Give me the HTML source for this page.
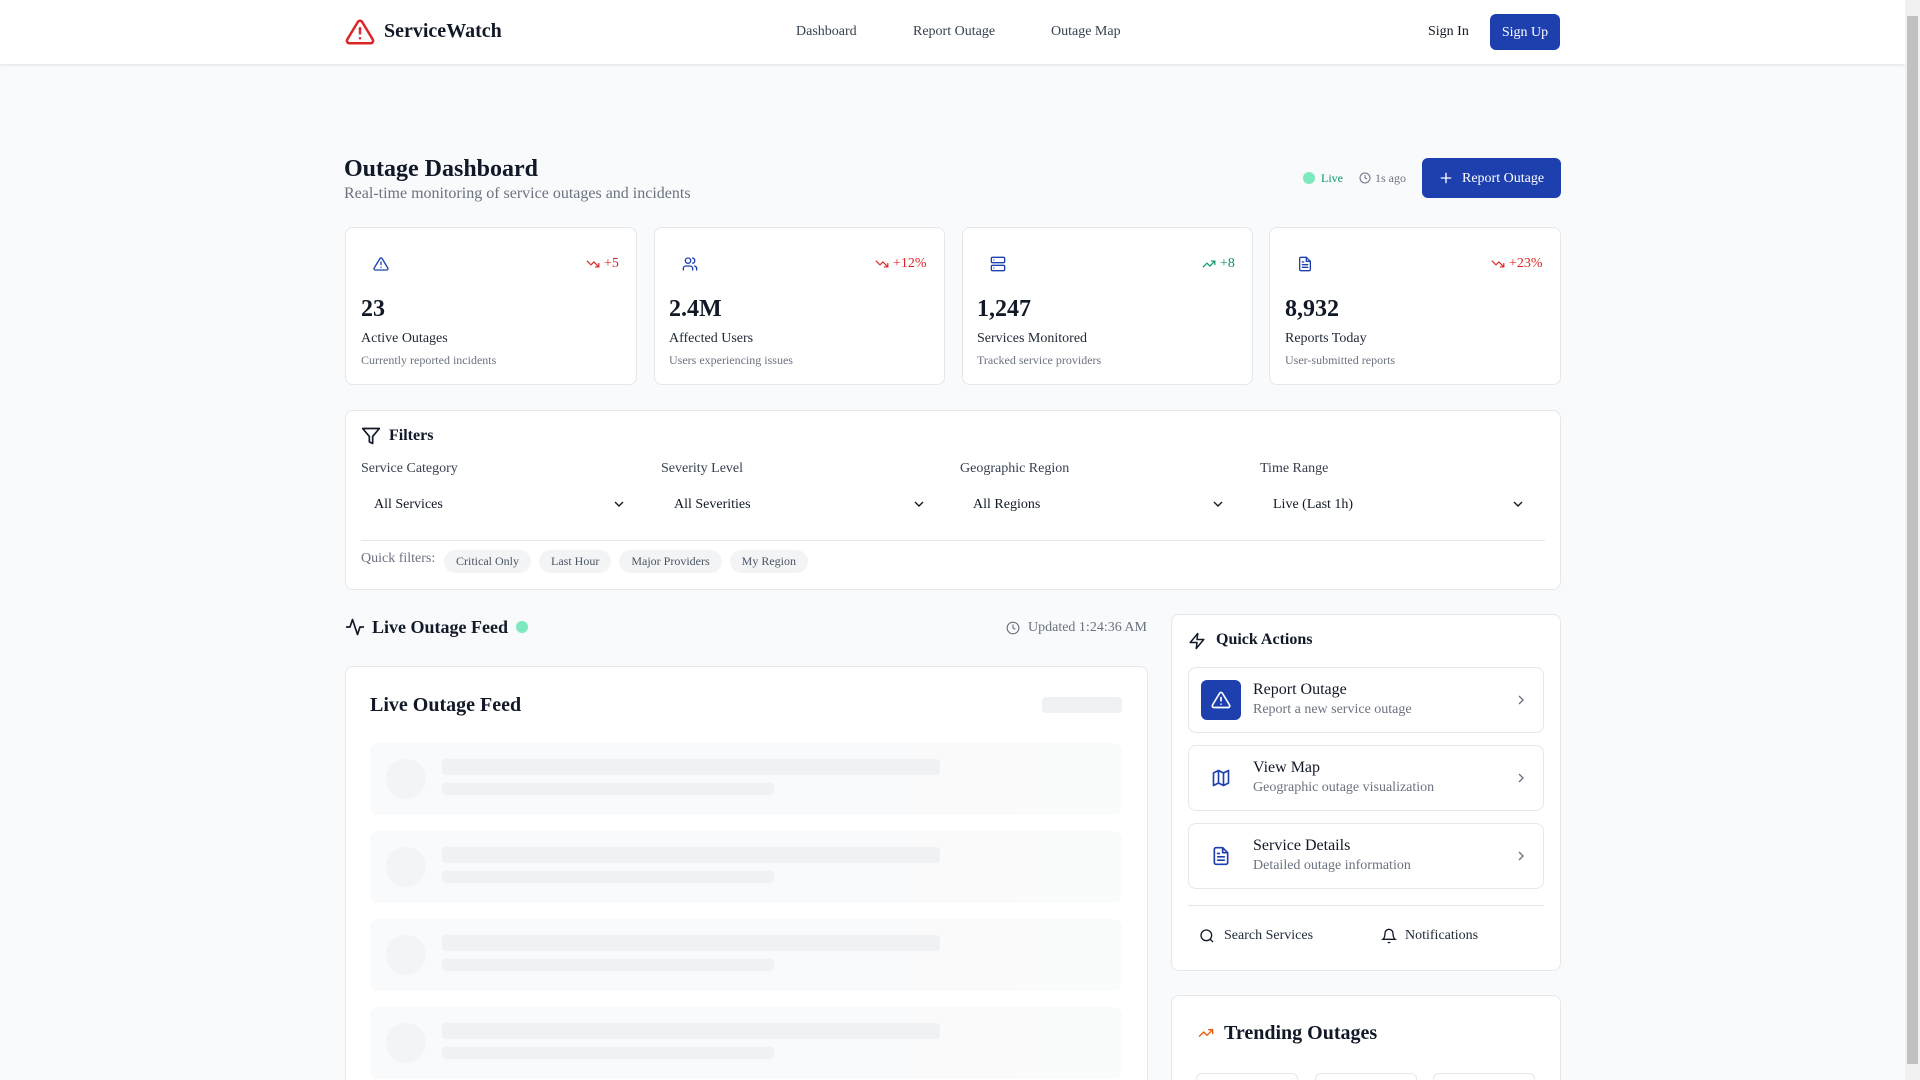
<!DOCTYPE html>
<html><head><meta charset="utf-8"><style>
*{box-sizing:border-box;margin:0;padding:0}
html,body{width:1920px;height:1080px;overflow:hidden}
body{background:#f9fafb;font-family:"Liberation Serif",serif;color:#111827;position:relative}
.abs{position:absolute}
nav{position:absolute;left:0;top:0;width:1905px;height:64px;background:#fff;box-shadow:0 1px 3px rgba(0,0,0,.1)}
.card{position:absolute;background:#fff;border:1px solid #e5e7eb;border-radius:8px}
.sb{position:absolute;left:1905px;top:0;width:15px;height:1080px;background:#f1f1f1}
.sb i{position:absolute;left:2px;top:16px;width:11px;height:1048px;background:#c1c1c1}
svg{display:block}
.muted{color:#6b7280}
.sel{position:absolute;top:484px;height:40px;width:276px;font-size:14px;color:#111827;padding:13px 13px 0}
.sel svg{position:absolute;right:10px;top:12px}
.chip{display:inline-block;background:#f3f4f6;border-radius:12px;font-size:12px;color:#4b5563;padding:4px 12px;margin-right:8px}
.row{position:absolute;left:370px;width:752px;height:72px;border-radius:8px;background:linear-gradient(90deg,#f9fafb,#f9fafb 60%,#fafbfb)}
.row .c{position:absolute;left:16px;top:16px;width:40px;height:40px;border-radius:50%;background:#f3f4f6}
.row .l1{position:absolute;left:72px;top:16px;width:498px;height:16px;border-radius:4px;background:#f0f1f3}
.row .l2{position:absolute;left:72px;top:40px;width:332px;height:12px;border-radius:4px;background:#f0f1f3}
.qa{position:absolute;left:1188px;width:356px;height:66px;border:1px solid #e5e7eb;border-radius:8px;background:#fff}
.qa .ic{position:absolute;left:12px;top:12px;width:40px;height:40px;border-radius:6px;display:flex;align-items:center;justify-content:center}
.qa .t{position:absolute;left:64px;top:13px;font-size:16px;color:#111827}
.qa .s{position:absolute;left:64px;top:34px;font-size:14px;color:#6b7280}
.qa .ch{position:absolute;right:14px;top:24px}
.tr{position:absolute;top:256px;font-size:14px;display:flex;align-items:center;gap:4px}
</style></head><body>
<nav>
 <svg class="abs" style="left:345px;top:17px" width="30" height="30" viewBox="0 0 24 24" fill="none" stroke="#dc2626" stroke-width="2" stroke-linecap="round" stroke-linejoin="round"><path d="M10.3 3.9 1.8 18a2 2 0 0 0 1.7 3h17a2 2 0 0 0 1.7-3L13.7 3.9a2 2 0 0 0-3.4 0z"/><path d="M12 9v4M12 17h.01"/></svg>
 <div class="abs" style="left:384px;top:20px;font-size:20px;font-weight:bold">ServiceWatch</div>
 <div class="abs" style="left:796px;top:24px;font-size:14px;color:#374151">Dashboard</div>
 <div class="abs" style="left:913px;top:24px;font-size:14px;color:#374151">Report Outage</div>
 <div class="abs" style="left:1051px;top:24px;font-size:14px;color:#374151">Outage Map</div>
 <div class="abs" style="left:1428px;top:24px;font-size:14px;color:#111827">Sign In</div>
 <div class="abs" style="left:1490px;top:14px;width:70px;height:36px;background:#1e40af;border-radius:6px;color:#fff;font-size:14px;text-align:center;line-height:37px">Sign Up</div>
</nav>

<div class="abs" style="left:344px;top:156px;font-size:24px;font-weight:bold">Outage Dashboard</div>
<div class="abs muted" style="left:344px;top:185px;font-size:16px">Real-time monitoring of service outages and incidents</div>
<div class="abs" style="left:1303px;top:172px;width:12px;height:12px;border-radius:50%;background:#6ee7b7;opacity:.9"></div>
<div class="abs" style="left:1321px;top:171px;font-size:12px;color:#059669">Live</div>
<svg class="abs" style="left:1359px;top:172px" width="12" height="12" viewBox="0 0 24 24" fill="none" stroke="#6b7280" stroke-width="2"><circle cx="12" cy="12" r="10"/><path d="M12 6v6l4 2"/></svg>
<div class="abs muted" style="left:1375px;top:171px;font-size:12px">1s ago</div>
<div class="abs" style="left:1422px;top:158px;width:139px;height:40px;background:#1e40af;border-radius:6px;color:#fff;font-size:14px;line-height:41px;padding-left:40px">Report Outage</div>
<svg class="abs" style="left:1438px;top:170px" width="16" height="16" viewBox="0 0 24 24" fill="none" stroke="#fff" stroke-width="2" stroke-linecap="round"><path d="M12 5v14M5 12h14"/></svg>

<div class="card" style="left:345px;top:227px;width:292px;height:158px"></div>
<div class="card" style="left:654px;top:227px;width:291px;height:158px"></div>
<div class="card" style="left:962px;top:227px;width:291px;height:158px"></div>
<div class="card" style="left:1269px;top:227px;width:292px;height:158px"></div>

<svg class="abs" style="left:373px;top:256px" width="16" height="16" viewBox="0 0 24 24" fill="none" stroke="#1e40af" stroke-width="2" stroke-linecap="round" stroke-linejoin="round"><path d="M10.3 3.9 1.8 18a2 2 0 0 0 1.7 3h17a2 2 0 0 0 1.7-3L13.7 3.9a2 2 0 0 0-3.4 0z"/><path d="M12 9v4M12 17h.01"/></svg>
<svg class="abs" style="left:682px;top:256px" width="16" height="16" viewBox="0 0 24 24" fill="none" stroke="#1e40af" stroke-width="2" stroke-linecap="round"><circle cx="9" cy="7" r="4"/><path d="M16 21v-2a4 4 0 0 0-4-4H6a4 4 0 0 0-4 4v2M16 3.1a4 4 0 0 1 0 7.8M22 21v-2a4 4 0 0 0-3-3.9"/></svg>
<svg class="abs" style="left:990px;top:256px" width="16" height="16" viewBox="0 0 24 24" fill="none" stroke="#1e40af" stroke-width="2" stroke-linecap="round"><rect x="2" y="2" width="20" height="8" rx="2"/><rect x="2" y="14" width="20" height="8" rx="2"/><path d="M6 6h.01M6 18h.01"/></svg>
<svg class="abs" style="left:1297px;top:256px" width="16" height="16" viewBox="0 0 24 24" fill="none" stroke="#1e40af" stroke-width="2" stroke-linecap="round" stroke-linejoin="round"><path d="M14 2H6a2 2 0 0 0-2 2v16a2 2 0 0 0 2 2h12a2 2 0 0 0 2-2V8z"/><path d="M14 2v6h6M16 13H8M16 17H8M10 9H8"/></svg>

<div class="tr" style="left:586px;color:#dc2626"><svg width="14" height="14" viewBox="0 0 24 24" fill="none" stroke="#dc2626" stroke-width="2" stroke-linecap="round" stroke-linejoin="round"><path d="m22 17-8.5-8.5-5 5L2 7M16 17h6v-6"/></svg>+5</div>
<div class="tr" style="left:875px;color:#dc2626"><svg width="14" height="14" viewBox="0 0 24 24" fill="none" stroke="#dc2626" stroke-width="2" stroke-linecap="round" stroke-linejoin="round"><path d="m22 17-8.5-8.5-5 5L2 7M16 17h6v-6"/></svg>+12%</div>
<div class="tr" style="left:1202px;color:#059669"><svg width="14" height="14" viewBox="0 0 24 24" fill="none" stroke="#059669" stroke-width="2" stroke-linecap="round" stroke-linejoin="round"><path d="m22 7-8.5 8.5-5-5L2 17M16 7h6v6"/></svg>+8</div>
<div class="tr" style="left:1491px;color:#dc2626"><svg width="14" height="14" viewBox="0 0 24 24" fill="none" stroke="#dc2626" stroke-width="2" stroke-linecap="round" stroke-linejoin="round"><path d="m22 17-8.5-8.5-5 5L2 7M16 17h6v-6"/></svg>+23%</div>

<div class="abs" style="left:361px;top:296px;font-size:24px;font-weight:bold">23</div>
<div class="abs" style="left:669px;top:296px;font-size:24px;font-weight:bold">2.4M</div>
<div class="abs" style="left:977px;top:296px;font-size:24px;font-weight:bold">1,247</div>
<div class="abs" style="left:1285px;top:296px;font-size:24px;font-weight:bold">8,932</div>
<div class="abs" style="left:361px;top:331px;font-size:14px;color:#1f2937">Active Outages</div>
<div class="abs" style="left:669px;top:331px;font-size:14px;color:#1f2937">Affected Users</div>
<div class="abs" style="left:977px;top:331px;font-size:14px;color:#1f2937">Services Monitored</div>
<div class="abs" style="left:1285px;top:331px;font-size:14px;color:#1f2937">Reports Today</div>
<div class="abs muted" style="left:361px;top:353px;font-size:12px">Currently reported incidents</div>
<div class="abs muted" style="left:669px;top:353px;font-size:12px">Users experiencing issues</div>
<div class="abs muted" style="left:977px;top:353px;font-size:12px">Tracked service providers</div>
<div class="abs muted" style="left:1285px;top:353px;font-size:12px">User-submitted reports</div>

<div class="card" style="left:345px;top:410px;width:1216px;height:180px"></div>
<svg class="abs" style="left:361px;top:426px" width="20" height="20" viewBox="0 0 24 24" fill="none" stroke="#111827" stroke-width="2" stroke-linejoin="round"><path d="M22 3H2l8 9.5V19l4 2v-8.5z"/></svg>
<div class="abs" style="left:389px;top:427px;font-size:16px;font-weight:bold">Filters</div>
<div class="abs" style="left:361px;top:461px;font-size:14px;color:#374151">Service Category</div>
<div class="abs" style="left:661px;top:461px;font-size:14px;color:#374151">Severity Level</div>
<div class="abs" style="left:960px;top:461px;font-size:14px;color:#374151">Geographic Region</div>
<div class="abs" style="left:1260px;top:461px;font-size:14px;color:#374151">Time Range</div>
<div class="sel" style="left:361px">All Services<svg width="16" height="16" viewBox="0 0 24 24" fill="none" stroke="#111827" stroke-width="2"><path d="m6 9 6 6 6-6"/></svg></div>
<div class="sel" style="left:661px">All Severities<svg width="16" height="16" viewBox="0 0 24 24" fill="none" stroke="#111827" stroke-width="2"><path d="m6 9 6 6 6-6"/></svg></div>
<div class="sel" style="left:960px">All Regions<svg width="16" height="16" viewBox="0 0 24 24" fill="none" stroke="#111827" stroke-width="2"><path d="m6 9 6 6 6-6"/></svg></div>
<div class="sel" style="left:1260px">Live (Last 1h)<svg width="16" height="16" viewBox="0 0 24 24" fill="none" stroke="#111827" stroke-width="2"><path d="m6 9 6 6 6-6"/></svg></div>
<div class="abs" style="left:361px;top:540px;width:1184px;height:1px;background:#e5e7eb"></div>
<div class="abs muted" style="left:361px;top:551px;font-size:14px">Quick filters:</div>
<div class="abs" style="left:444px;top:550px"><span class="chip">Critical Only</span><span class="chip">Last Hour</span><span class="chip">Major Providers</span><span class="chip">My Region</span></div>

<svg class="abs" style="left:345px;top:617px" width="20" height="20" viewBox="0 0 24 24" fill="none" stroke="#111827" stroke-width="2" stroke-linecap="round" stroke-linejoin="round"><path d="M22 12h-4l-3 9L9 3l-3 9H2"/></svg>
<div class="abs" style="left:372px;top:617px;font-size:18px;font-weight:bold">Live Outage Feed</div>
<div class="abs" style="left:516px;top:621px;width:12px;height:12px;border-radius:50%;background:#6ee7b7;opacity:.9"></div>
<svg class="abs" style="left:1006px;top:621px" width="14" height="14" viewBox="0 0 24 24" fill="none" stroke="#6b7280" stroke-width="2"><circle cx="12" cy="12" r="10"/><path d="M12 6v6l4 2"/></svg>
<div class="abs muted" style="left:1028px;top:620px;font-size:14px">Updated 1:24:36 AM</div>

<div class="card" style="left:345px;top:666px;width:803px;height:450px"></div>
<div class="abs" style="left:370px;top:694px;font-size:20px;font-weight:bold">Live Outage Feed</div>
<div class="abs" style="left:1042px;top:697px;width:80px;height:16px;border-radius:4px;background:#f0f1f3"></div>
<div class="row" style="top:743px"><div class="c"></div><div class="l1"></div><div class="l2"></div></div>
<div class="row" style="top:831px"><div class="c"></div><div class="l1"></div><div class="l2"></div></div>
<div class="row" style="top:919px"><div class="c"></div><div class="l1"></div><div class="l2"></div></div>
<div class="row" style="top:1007px"><div class="c"></div><div class="l1"></div><div class="l2"></div></div>

<div class="card" style="left:1171px;top:614px;width:390px;height:357px"></div>
<svg class="abs" style="left:1188px;top:631px" width="18" height="20" viewBox="0 0 24 24" fill="none" stroke="#111827" stroke-width="2" stroke-linejoin="round"><path d="M13 2 3 14h9l-1 8 10-12h-9z"/></svg>
<div class="abs" style="left:1216px;top:631px;font-size:16px;font-weight:bold">Quick Actions</div>
<div class="qa" style="top:667px"><div class="ic" style="background:#1e40af"><svg width="20" height="20" viewBox="0 0 24 24" fill="none" stroke="#fff" stroke-width="2" stroke-linecap="round" stroke-linejoin="round"><path d="M10.3 3.9 1.8 18a2 2 0 0 0 1.7 3h17a2 2 0 0 0 1.7-3L13.7 3.9a2 2 0 0 0-3.4 0z"/><path d="M12 9v4M12 17h.01"/></svg></div><div class="t">Report Outage</div><div class="s">Report a new service outage</div><svg class="ch" width="16" height="16" viewBox="0 0 24 24" fill="none" stroke="#6b7280" stroke-width="2"><path d="m9 18 6-6-6-6"/></svg></div>
<div class="qa" style="top:745px"><div class="ic"><svg width="20" height="20" viewBox="0 0 24 24" fill="none" stroke="#1e40af" stroke-width="2" stroke-linejoin="round"><path d="M3 6l6-3 6 3 6-3v15l-6 3-6-3-6 3zM9 3v15M15 6v15"/></svg></div><div class="t">View Map</div><div class="s">Geographic outage visualization</div><svg class="ch" width="16" height="16" viewBox="0 0 24 24" fill="none" stroke="#6b7280" stroke-width="2"><path d="m9 18 6-6-6-6"/></svg></div>
<div class="qa" style="top:823px"><div class="ic"><svg width="20" height="20" viewBox="0 0 24 24" fill="none" stroke="#1e40af" stroke-width="2" stroke-linecap="round" stroke-linejoin="round"><path d="M14 2H6a2 2 0 0 0-2 2v16a2 2 0 0 0 2 2h12a2 2 0 0 0 2-2V8z"/><path d="M14 2v6h6M16 13H8M16 17H8M10 9H8"/></svg></div><div class="t">Service Details</div><div class="s">Detailed outage information</div><svg class="ch" width="16" height="16" viewBox="0 0 24 24" fill="none" stroke="#6b7280" stroke-width="2"><path d="m9 18 6-6-6-6"/></svg></div>
<div class="abs" style="left:1188px;top:905px;width:356px;height:1px;background:#e5e7eb"></div>
<svg class="abs" style="left:1199px;top:928px" width="16" height="16" viewBox="0 0 24 24" fill="none" stroke="#111827" stroke-width="2"><circle cx="11" cy="11" r="8"/><path d="m21 21-4.3-4.3"/></svg>
<div class="abs" style="left:1224px;top:928px;font-size:14px;color:#1f2937">Search Services</div>
<svg class="abs" style="left:1381px;top:928px" width="16" height="16" viewBox="0 0 24 24" fill="none" stroke="#111827" stroke-width="2"><path d="M6 8a6 6 0 0 1 12 0c0 7 3 9 3 9H3s3-2 3-9M10.3 21a1.9 1.9 0 0 0 3.4 0"/></svg>
<div class="abs" style="left:1405px;top:928px;font-size:14px;color:#1f2937">Notifications</div>

<div class="card" style="left:1171px;top:995px;width:390px;height:120px"></div>
<svg class="abs" style="left:1196px;top:1025px" width="20" height="16" viewBox="0 0 24 24" fill="none" stroke="#ea580c" stroke-width="2" stroke-linecap="round" stroke-linejoin="round"><path d="m22 7-8.5 8.5-5-5L2 17M16 7h6v6"/></svg>
<div class="abs" style="left:1224px;top:1022px;font-size:20px;font-weight:bold">Trending Outages</div>
<div class="abs" style="left:1196px;top:1073px;width:102px;height:30px;border:1px solid #e5e7eb;border-radius:6px"></div>
<div class="abs" style="left:1315px;top:1073px;width:102px;height:30px;border:1px solid #e5e7eb;border-radius:6px"></div>
<div class="abs" style="left:1433px;top:1073px;width:102px;height:30px;border:1px solid #e5e7eb;border-radius:6px"></div>

<div class="sb"><i></i></div>
</body></html>
